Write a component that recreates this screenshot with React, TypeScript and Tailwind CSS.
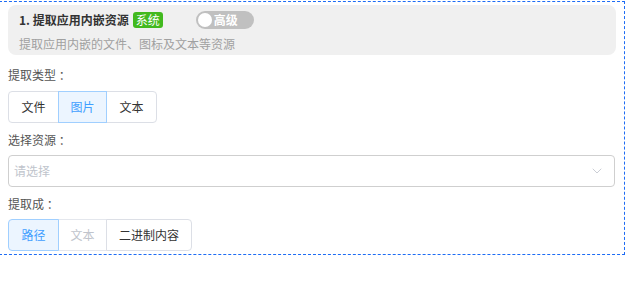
import React, { useState } from 'react'
import { ChevronDown } from 'lucide-react'

const Segmented = ({
  items,
  value,
  disabled = [],
  onChange,
}: {
  items: { label: string; w: string }[]
  value: string
  disabled?: string[]
  onChange: (v: string) => void
}) => (
  <div className="flex h-[32px]">
    {items.map((item, i) => {
      const active = item.label === value
      const off = disabled.includes(item.label)
      const first = i === 0
      const last = i === items.length - 1
      return (
        <button
          key={item.label}
          disabled={off}
          onClick={() => onChange(item.label)}
          className={[
            item.w,
            'h-full flex items-center justify-center text-[12px] border',
            first ? 'rounded-l-[4px]' : '-ml-px',
            last ? 'rounded-r-[4px]' : '',
            active
              ? 'relative z-10 bg-[#ecf5ff] border-[#a0cfff] text-[#409eff]'
              : off
                ? 'bg-white border-[#e4e7ed] text-[#c0c4cc]'
                : 'bg-white border-[#dcdfe6] text-[#333333]',
          ].join(' ')}
        >
          {item.label}
        </button>
      )
    })}
  </div>
)

export default function App() {
  const [kind, setKind] = useState('图片')
  const [output, setOutput] = useState('路径')
  const [advanced, setAdvanced] = useState(false)

  return (
    <div
      className="bg-white w-[629px] h-[289px] overflow-hidden"
      style={{ fontFamily: '"Noto Sans CJK SC", "Noto Sans", sans-serif' }}
    >
      <div className="mt-px -ml-px w-[626px] h-[254px] border border-dashed border-[#1d6cf5] pt-[3px] pl-[8px] pr-[8px]">
        <div className="bg-[#f0f0f0] rounded-[8px] h-[50px] pl-[11px] pt-[6px]">
          <div className="flex items-center h-[17px]">
            <span className="text-[12px] font-bold text-[#333333]">1. 提取应用内嵌资源</span>
            <span className="ml-[4px] bg-[#42b91e] text-white text-[12px] leading-[16px] px-[3px] rounded-[3px] mt-px">
              系统
            </span>
            <button
              onClick={() => setAdvanced(!advanced)}
              className="ml-[33px] w-[58px] h-[18px] rounded-full bg-[#c0c0c0] flex items-center pl-[2px] mt-px"
            >
              <span className="w-[14px] h-[14px] rounded-full bg-white" />
              <span className="ml-[2px] text-white text-[12px] font-bold leading-none">高级</span>
            </button>
          </div>
          <div className="mt-[9px] text-[12px] leading-[14px] text-[#a0a0a0]">
            提取应用内嵌的文件、图标及文本等资源
          </div>
        </div>

        <div className="mt-[13px] text-[12px] leading-[14px] text-[#555555]">提取类型 ：</div>
        <div className="mt-[9px]">
          <Segmented
            items={[
              { label: '文件', w: 'w-[51px]' },
              { label: '图片', w: 'w-[49px]' },
              { label: '文本', w: 'w-[51px]' },
            ]}
            value={kind}
            onChange={setKind}
          />
        </div>

        <div className="mt-[10px] text-[12px] leading-[14px] text-[#555555]">选择资源 ：</div>
        <div className="mt-[8px] h-[32px] w-[607px] border border-[#cfcfcf] rounded-[4px] flex items-center justify-between pl-[5px] pr-[9px]">
          <span className="text-[12px] text-[#c0c4cc]">请选择</span>
          <ChevronDown className="w-[16px] h-[16px] text-[#c0c4cc]" strokeWidth={1.25} />
        </div>

        <div className="mt-[10px] text-[12px] leading-[14px] text-[#555555]">提取成 ：</div>
        <div className="mt-[8px]">
          <Segmented
            items={[
              { label: '路径', w: 'w-[51px]' },
              { label: '文本', w: 'w-[49px]' },
              { label: '二进制内容', w: 'w-[86px]' },
            ]}
            value={output}
            disabled={['文本']}
            onChange={setOutput}
          />
        </div>
      </div>
    </div>
  )
}
